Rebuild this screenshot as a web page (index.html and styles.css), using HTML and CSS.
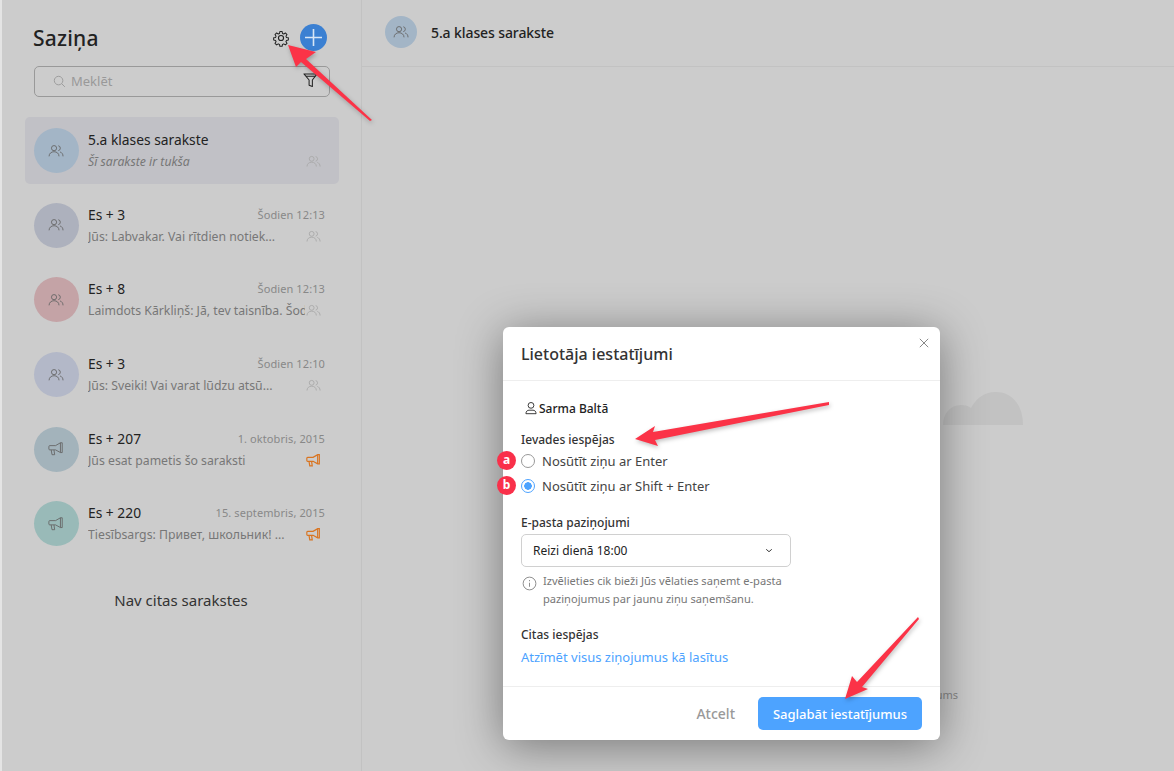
FILE: index.html
```html
<!DOCTYPE html>
<html lang="lv">
<head>
    <meta charset="UTF-8">
    <meta name="viewport" content="width=device-width, initial-scale=1.0">
    <title>Saziņa</title>
    <link rel="stylesheet" href="styles.css">
</head>
<body>
    <svg class="icon-defs" width="0" height="0">
        <symbol id="i-users" viewBox="0 0 18 18">
            <circle cx="6.8" cy="5.8" r="2.9"/>
            <path d="M1.2 15c0-3.2 2.5-5.2 5.6-5.2s5.6 2 5.6 5.2"/>
            <path d="M11.6 3.1a2.8 2.8 0 0 1 0 5.5M13.6 10.1c2 .6 3.3 2.4 3.3 4.900"/>
        </symbol>
        <symbol id="i-horn" viewBox="0 0 18 18">
            <path d="M2 5.200h6.500l5.500-3.200h2v11h-2l-5.500-3h-6.500a1 1 0 0 1-1-1V6.200a1 1 0 0 1 1-1z"/>
            <path d="M14 2v11M3.600 10l.9 5.400h3l-.8-5.400"/>
        </symbol>
    </svg>

    <div class="page">
        <aside class="sidebar">
            <div class="side-head">
                <h1>Saziņa</h1>
                <svg class="gear" viewBox="0 0 24 24">
                    <path d="M10.3 2.5h3.4l.5 2.8 1.9.8 2.4-1.6 2.4 2.4-1.6 2.4.8 1.9 2.8.5v3.4l-2.8.5-.8 1.9 1.6 2.4-2.4 2.4-2.4-1.6-1.9.8-.5 2.8h-3.4l-.5-2.8-1.9-.8-2.4 1.6-2.4-2.4 1.6-2.4-.8-1.9-2.8-.5v-3.4l2.8-.5.8-1.9-1.6-2.4 2.4-2.4 2.4 1.6 1.9-.8z" transform="translate(1.2 1.2) scale(.9)"/>
                    <circle cx="12" cy="12" r="3.4"/>
                </svg>
                <span class="add-btn">
                    <svg viewBox="0 0 27 27"><path d="M13.5 5v17M5 13.5h17"/></svg>
                </span>
            </div>
            <div class="search">
                <svg class="search-icon" viewBox="0 0 14 14"><circle cx="6" cy="6" r="4.6"/><path d="M9.4 9.4l3.4 3.4"/></svg>
                <span>Meklēt</span>
                <svg class="filter-icon" viewBox="0 0 16 16"><path d="M1 1.500h14l-5 6.500v7l-3.500-1.500V8z"/><path d="M3.200 4h9.600"/></svg>
            </div>

            <ul class="chat-list">
                <li class="chat active">
                    <span class="avatar av-blue"><svg><use href="#i-users"/></svg></span>
                    <div class="chat-text">
                        <div class="chat-row">
                            <span class="chat-name">5.a klases sarakste</span>
                        </div>
                        <div class="chat-row">
                            <span class="chat-sub empty">Šī sarakste ir tukša</span>
                            <svg class="kind"><use href="#i-users"/></svg>
                        </div>
                    </div>
                </li>
                <li class="chat">
                    <span class="avatar av-grey"><svg><use href="#i-users"/></svg></span>
                    <div class="chat-text">
                        <div class="chat-row">
                            <span class="chat-name">Es + 3</span>
                            <span class="chat-time">Šodien 12:13</span>
                        </div>
                        <div class="chat-row">
                            <span class="chat-sub">Jūs: Labvakar. Vai rītdien notiek...</span>
                            <svg class="kind"><use href="#i-users"/></svg>
                        </div>
                    </div>
                </li>
                <li class="chat">
                    <span class="avatar av-red"><svg><use href="#i-users"/></svg></span>
                    <div class="chat-text">
                        <div class="chat-row">
                            <span class="chat-name">Es + 8</span>
                            <span class="chat-time">Šodien 12:13</span>
                        </div>
                        <div class="chat-row">
                            <span class="chat-sub">Laimdots Kārkliņš: Jā, tev taisnība. Šodien</span>
                            <svg class="kind"><use href="#i-users"/></svg>
                        </div>
                    </div>
                </li>
                <li class="chat">
                    <span class="avatar av-lilac"><svg><use href="#i-users"/></svg></span>
                    <div class="chat-text">
                        <div class="chat-row">
                            <span class="chat-name">Es + 3</span>
                            <span class="chat-time">Šodien 12:10</span>
                        </div>
                        <div class="chat-row">
                            <span class="chat-sub">Jūs: Sveiki! Vai varat lūdzu atsū...</span>
                            <svg class="kind"><use href="#i-users"/></svg>
                        </div>
                    </div>
                </li>
                <li class="chat">
                    <span class="avatar av-slate"><svg><use href="#i-horn"/></svg></span>
                    <div class="chat-text">
                        <div class="chat-row">
                            <span class="chat-name">Es + 207</span>
                            <span class="chat-time">1. oktobris, 2015</span>
                        </div>
                        <div class="chat-row">
                            <span class="chat-sub">Jūs esat pametis šo saraksti</span>
                            <svg class="kind orange"><use href="#i-horn"/></svg>
                        </div>
                    </div>
                </li>
                <li class="chat">
                    <span class="avatar av-teal"><svg><use href="#i-horn"/></svg></span>
                    <div class="chat-text">
                        <div class="chat-row">
                            <span class="chat-name">Es + 220</span>
                            <span class="chat-time">15. septembris, 2015</span>
                        </div>
                        <div class="chat-row">
                            <span class="chat-sub">Tiesībsargs: Привет, школьник! ...</span>
                            <svg class="kind orange"><use href="#i-horn"/></svg>
                        </div>
                    </div>
                </li>
            </ul>
            <p class="no-more">Nav citas sarakstes</p>
        </aside>

        <main class="content">
            <header class="content-head">
                <span class="avatar small av-blue"><svg><use href="#i-users"/></svg></span>
                <h2>5.a klases sarakste</h2>
            </header>
            <div class="empty-state">
                <svg class="cloud" viewBox="0 0 80 33">
                    <path d="M0 33c0-11 7-20 18-20 4 0 8 1 10 3 5-9 12-16 25-16 15 0 27 12 27 33z"/>
                </svg>
                <p class="empty-hint">ziņojums</p>
            </div>
        </main>
    </div>

    <section class="modal">
        <header class="modal-head">
            <h3>Lietotāja iestatījumi</h3>
            <svg class="close" viewBox="0 0 10 10"><path d="M.8.8l8.4 8.4M9.2.8L.8 9.2"/></svg>
        </header>
        <div class="modal-body">
            <div class="user-line">
                <svg viewBox="0 0 16 16"><circle cx="8" cy="5" r="3.3"/><path d="M2.2 14.5c0-2.6 1.6-4 3.5-4h4.600c1.900 0 3.500 1.400 3.500 4z"/></svg>
                <span>Sarma Baltā</span>
            </div>
            <h4 class="opt-title">Ievades iespējas</h4>
            <label class="radio-row">
                <span class="badge">a</span>
                <span class="radio"></span>
                <span>Nosūtīt ziņu ar Enter</span>
            </label>
            <label class="radio-row">
                <span class="badge">b</span>
                <span class="radio checked"></span>
                <span>Nosūtīt ziņu ar Shift + Enter</span>
            </label>

            <h4 class="opt-title mail-title">E-pasta paziņojumi</h4>
            <div class="select">
                <span>Reizi dienā 18:00</span>
                <svg viewBox="0 0 10 6"><path d="M1.500 1.500L5 4.500l3.500-3"/></svg>
            </div>
            <div class="hint">
                <svg viewBox="0 0 16 16"><circle cx="8" cy="8" r="6.800"/><path d="M8 7.200v4.300M8 4.300v1.300"/></svg>
                <p>Izvēlieties cik bieži Jūs vēlaties saņemt e-pasta paziņojumus par jaunu ziņu saņemšanu.</p>
            </div>

            <h4 class="opt-title other-title">Citas iespējas</h4>
            <a class="mark-read" href="#">Atzīmēt visus ziņojumus kā lasītus</a>
        </div>
        <footer class="modal-foot">
            <button class="btn-cancel">Atcelt</button>
            <button class="btn-save">Saglabāt iestatījumus</button>
        </footer>
    </section>

    <!-- annotation arrows -->
    <svg class="arrows" viewBox="0 0 1174 771">
        <polygon points="288,45 316,52 306,59 372,120 370,121 301,62 296,67"/>
        <polygon points="635,439 655,426 653,432 829,402 829,405 655,440 658,446"/>
        <polygon points="845,699 852,676 857,682 918,617 919,619 862,687 868,689"/>
    </svg>
</body>
</html>
```

FILE: styles.css
```css
* {
    box-sizing: border-box;
}
html, body {
    height: 100%;
}
body {
    margin: 0;
    font-family: "Noto Sans", "Open Sans", sans-serif;
    color: #222;
    background-color: #ccc;
    overflow: hidden;
}
h1, h2, h3, h4, p, ul {
    margin: 0;
    padding: 0;
}
.icon-defs {
    position: absolute;
}
.page {
    display: flex;
    height: 100%;
    border-left: 2px solid #e4e4e4;
}

/* sidebar */
.sidebar {
    width: 360px;
    flex-shrink: 0;
    border-right: 1px solid #c2c2c2;
    padding: 0 22px 0 23px;
}
.side-head {
    display: flex;
    align-items: center;
    height: 27px;
    margin-top: 24px;
    padding-left: 8px;
}
.side-head h1 {
    font-size: 21px;
    font-weight: 500;
    flex: 1;
    letter-spacing: 0.2px;
}
.gear {
    width: 18px;
    height: 18px;
    fill: none;
    stroke: #222;
    stroke-width: 1.5;
    stroke-linejoin: round;
    margin-right: 10px;
}
.add-btn {
    width: 27px;
    height: 27px;
    border-radius: 50%;
    background-color: #3b80d2;
    margin-right: 12px;
}
.add-btn svg {
    display: block;
    stroke: #d8e6f6;
    stroke-width: 1.6;
}
.search {
    display: flex;
    align-items: center;
    width: 296px;
    height: 31px;
    margin: 15px 0 0 9px;
    padding: 0 0 1px 18px;
    border: 1px solid #999;
    border-radius: 5px;
    color: #999;
    font-size: 13px;
}
.search-icon {
    width: 13px;
    height: 13px;
    fill: none;
    stroke: #999;
    margin-right: 5px;
}
.search span {
    flex: 1;
}
.filter-icon {
    width: 15px;
    height: 16px;
    fill: none;
    stroke: #222;
    stroke-width: 1.1;
    stroke-linejoin: round;
    margin: -2px 11px 0 0;
}
.chat-list {
    list-style: none;
    margin-top: 20px;
    width: 314px;
}
.chat {
    display: flex;
    align-items: center;
    height: 67px;
    margin-bottom: 7.7px;
    padding: 0 14px 0 9px;
    border-radius: 5px;
}
.chat.active {
    background-color: #c1c1c6;
}
.avatar {
    width: 45px;
    height: 45px;
    flex-shrink: 0;
    border-radius: 50%;
    display: flex;
    align-items: center;
    justify-content: center;
}
.avatar svg {
    width: 16px;
    height: 16px;
    margin-right: 1px;
    fill: none;
    stroke: #666;
    stroke-width: 1;
}
.avatar.small {
    width: 32px;
    height: 32px;
}
.av-blue { background-color: #a3b5c6; }
.av-grey { background-color: #adb1bd; }
.av-red { background-color: #c4a3a6; }
.av-lilac { background-color: #b3b8c8; }
.av-slate { background-color: #a3b3bb; }
.av-teal { background-color: #99bab8; }
.chat-text {
    flex: 1;
    min-width: 0;
    margin-left: 9px;
}
.chat-row {
    display: flex;
    align-items: center;
    justify-content: space-between;
    height: 21px;
}
.chat-row + .chat-row {
    margin-top: 1px;
}
.chat-name {
    font-size: 13.8px;
}
.chat-time {
    font-size: 11px;
    color: #888;
    letter-spacing: 0.1px;
}
.chat-sub {
    width: 217px;
    font-size: 12.25px;
    color: #777;
    white-space: nowrap;
    overflow: hidden;
}
.chat-sub.empty {
    font-style: italic;
}
.kind {
    width: 15px;
    height: 15px;
    fill: none;
    stroke: #aaa;
    stroke-width: 1.1;
    margin-right: 4px;
    flex-shrink: 0;
}
.kind.orange {
    stroke: #d97420;
    stroke-width: 1.4;
}
.no-more {
    margin-top: 33px;
    width: 312px;
    text-align: center;
    font-size: 15px;
    color: #333;
}

/* right side */
.content {
    flex: 1;
    min-width: 0;
    display: flex;
    flex-direction: column;
}
.content-head {
    display: flex;
    align-items: center;
    gap: 14px;
    height: 67px;
    padding: 0 0 2px 23px;
    border-bottom: 1px solid #c2c2c2;
}
.content-head h2 {
    font-size: 14px;
    font-weight: 500;
    letter-spacing: -0.1px;
}
.empty-state {
    display: flex;
    flex-direction: column;
    align-items: flex-end;
    width: 661px;
}
.cloud {
    width: 80px;
    height: 33px;
    margin-top: 325px;
    fill: #c2c2c2;
}
.empty-hint {
    margin-top: 262px;
    margin-right: 65px;
    font-size: 11px;
    color: #888;
}

/* modal */
.modal {
    position: absolute;
    left: 503px;
    top: 327px;
    width: 437px;
    height: 413px;
    background-color: #fff;
    border-radius: 6px;
    box-shadow: 0 6px 46px rgba(0, 0, 0, 0.42);
    display: flex;
    flex-direction: column;
}
.modal-head {
    position: relative;
    height: 54px;
    padding: 16px 18px 0;
    border-bottom: 1px solid #eee;
}
.modal-head h3 {
    font-size: 16px;
    font-weight: 500;
    color: #333;
}
.close {
    position: absolute;
    top: 11px;
    right: 11px;
    width: 10px;
    height: 10px;
    stroke: #888;
    stroke-width: 1;
}
.modal-body {
    flex: 1;
    padding: 18px 18px 0;
}
.user-line {
    display: flex;
    align-items: center;
    gap: 1px;
    height: 18px;
    padding-left: 3px;
    font-size: 12px;
    font-weight: 500;
}
.user-line svg {
    width: 14px;
    height: 14px;
    fill: none;
    stroke: #222;
}
.opt-title {
    font-size: 12px;
    font-weight: 500;
    line-height: 18px;
    color: #333;
    margin-top: 14px;
}
.radio-row {
    position: relative;
    display: flex;
    align-items: center;
    gap: 7px;
    height: 25px;
    font-size: 13px;
    color: #444;
}
.opt-title + .radio-row {
    margin-top: -1px;
}
.radio {
    width: 14px;
    height: 14px;
    border: 1px solid #999;
    border-radius: 50%;
}
.radio.checked {
    border: 1px solid #4da3ff;
    background: radial-gradient(circle, #4da3ff 0 3.5px, #fff 4px);
}
.badge {
    position: absolute;
    left: -24px;
    top: 3px;
    width: 19px;
    height: 19px;
    border-radius: 50%;
    background-color: #f9304a;
    color: #fff;
    font-size: 12px;
    font-weight: 700;
    line-height: 18px;
    text-align: center;
}
.mail-title {
    margin-top: 16px;
}
.select {
    display: flex;
    align-items: center;
    justify-content: space-between;
    width: 270px;
    height: 33px;
    margin-top: 2px;
    padding: 0 17px 0 11px;
    border: 1px solid #d0d0d0;
    border-radius: 5px;
    font-size: 12px;
    color: #222;
}
.select svg {
    width: 8px;
    height: 5px;
    fill: none;
    stroke: #333;
    stroke-width: 1.2;
}
.hint {
    display: flex;
    gap: 6px;
    margin-top: 5px;
    padding-left: 1px;
    width: 280px;
}
.hint svg {
    width: 15px;
    height: 15px;
    margin-top: 4px;
    flex-shrink: 0;
    fill: none;
    stroke: #888;
}
.hint p {
    font-size: 11.1px;
    line-height: 18px;
    color: #777;
}
.other-title {
    margin-top: 18px;
}
.mark-read {
    display: block;
    margin-top: 4px;
    font-size: 13px;
    color: #4da3ff;
    text-decoration: none;
}
.modal-foot {
    display: flex;
    align-items: center;
    justify-content: flex-end;
    gap: 23px;
    height: 54px;
    padding: 0 18px 0 0;
    border-top: 1px solid #eee;
}
.modal-foot button {
    font-family: inherit;
    font-size: 13px;
    font-weight: 500;
    border: none;
    cursor: pointer;
}
.modal-foot .btn-cancel {
    background: none;
    padding: 0;
    color: #999;
    font-size: 14px;
}
.btn-save {
    width: 164px;
    height: 33px;
    border-radius: 5px;
    background-color: #4da3ff;
    color: #fff;
}

/* red arrows drawn over the screenshot */
.arrows {
    position: absolute;
    left: 0;
    top: 0;
    width: 1174px;
    height: 771px;
    pointer-events: none;
    fill: #fb3347;
    filter: drop-shadow(1px 2px 2px rgba(0, 0, 0, 0.25));
}
```
